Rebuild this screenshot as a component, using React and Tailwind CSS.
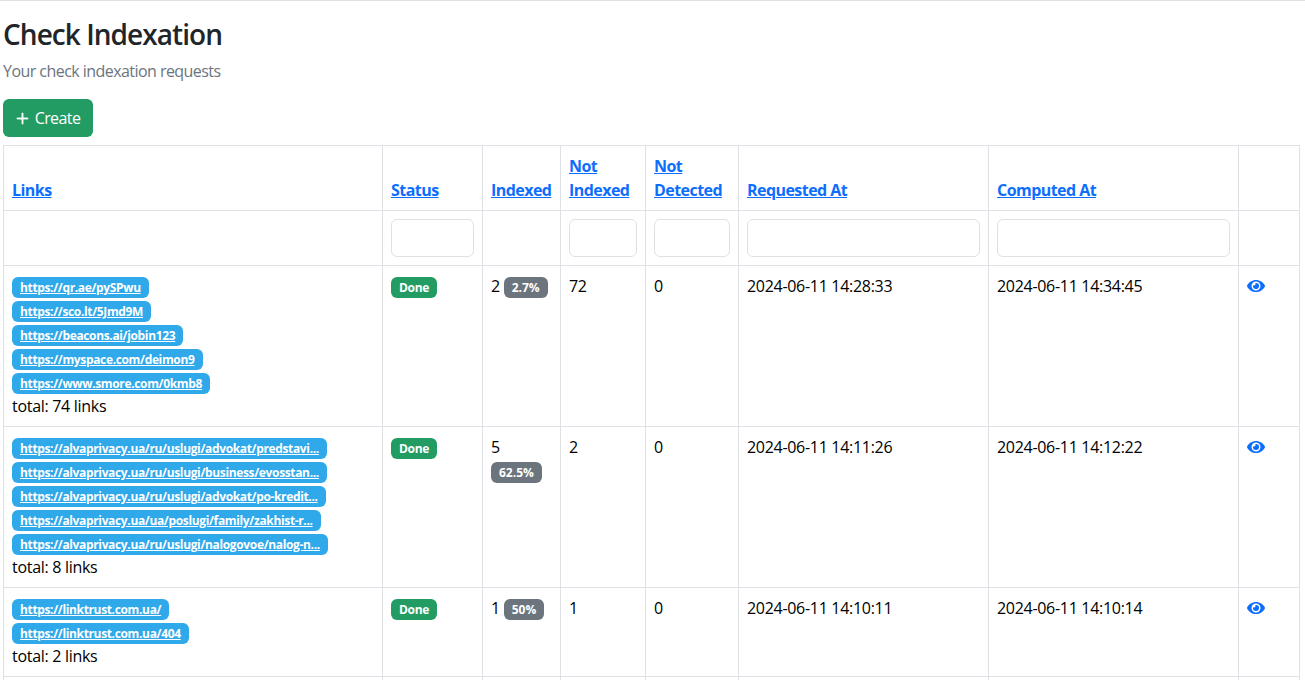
import { BsPlusLg } from 'react-icons/bs'
import { FaEye } from 'react-icons/fa'

const rows = [
  {
    links: ['https://qr.ae/pySPwu', 'https://sco.lt/5Jmd9M', 'https://beacons.ai/jobin123', 'https://myspace.com/deimon9', 'https://www.smore.com/0kmb8'],
    total: 74,
    indexed: 2,
    percent: '2.7%',
    notIndexed: 72,
    notDetected: 0,
    requested: '2024-06-11 14:28:33',
    computed: '2024-06-11 14:34:45',
  },
  {
    links: [
      'https://alvaprivacy.ua/ru/uslugi/advokat/predstavi...',
      'https://alvaprivacy.ua/ru/uslugi/business/evosstan...',
      'https://alvaprivacy.ua/ru/uslugi/advokat/po-kredit...',
      'https://alvaprivacy.ua/ua/poslugi/family/zakhist-r...',
      'https://alvaprivacy.ua/ru/uslugi/nalogovoe/nalog-n...',
    ],
    total: 8,
    indexed: 5,
    percent: '62.5%',
    notIndexed: 2,
    notDetected: 0,
    requested: '2024-06-11 14:11:26',
    computed: '2024-06-11 14:12:22',
  },
  {
    links: ['https://linktrust.com.ua/', 'https://linktrust.com.ua/404'],
    total: 2,
    indexed: 1,
    percent: '50%',
    notIndexed: 1,
    notDetected: 0,
    requested: '2024-06-11 14:10:11',
    computed: '2024-06-11 14:10:14',
  },
]

const headers = [
  ['Links'],
  ['Status'],
  ['Indexed'],
  ['Not', 'Indexed'],
  ['Not', 'Detected'],
  ['Requested At'],
  ['Computed At'],
]

const filters = [false, true, false, true, true, true, true, false]

const cell = 'border border-[#dee2e6] p-2 align-top text-black'
const badge = 'inline-block rounded-md px-2 py-1 text-xs leading-[13px] font-bold text-white'

export default function App() {
  return (
    <div className="h-[680px] overflow-hidden border-t border-[#dee2e6] bg-white px-[3px] font-['Open_Sans',sans-serif] text-base leading-6 tracking-[-0.3px] text-[#212529]">
      <h1 className="mt-4 mb-2 text-[28px] leading-[34px] font-[550] tracking-[-0.95px]">Check Indexation</h1>
      <p className="mb-4 tracking-[-0.55px] text-[#6c757d]">Your check indexation requests</p>
      <button className="mb-2 flex h-[38px] w-[90px] items-center justify-center gap-[5px] rounded-md bg-[#229c62] pr-[1px] tracking-[-0.6px] text-white">
        <BsPlusLg className="stroke-1 text-[15px]" />
        Create
      </button>
      <table className="w-[1296px] table-fixed border-collapse">
        <colgroup>
          <col className="w-[379px]" />
          <col className="w-[100px]" />
          <col className="w-[78px]" />
          <col className="w-[85px]" />
          <col className="w-[93px]" />
          <col className="w-[250px]" />
          <col className="w-[250px]" />
          <col className="w-[61px]" />
        </colgroup>
        <thead>
          <tr className="h-[65px]">
            {headers.map((lines) => (
              <th key={lines.join()} className="border border-[#dee2e6] px-2 py-2 text-left align-bottom font-bold tracking-[-0.55px] text-[#0d6efd] underline">
                {lines.map((line) => (
                  <div key={line}>{line}</div>
                ))}
              </th>
            ))}
            <th className="border border-[#dee2e6]" />
          </tr>
          <tr className="h-[55px]">
            {filters.map((hasInput, i) => (
              <th key={i} className="border border-[#dee2e6] p-2">
                {hasInput && <input type="text" className="block h-[38px] w-full rounded-md border border-[#dee2e6] bg-white" />}
              </th>
            ))}
          </tr>
        </thead>
        <tbody>
          {rows.map((row) => (
            <tr key={row.requested}>
              <td className={cell}>
                {row.links.map((link) => (
                  <div key={link}>
                    <a href="#" className={`${badge} bg-[#2fa9ea] tracking-[-0.35px] underline`}>{link}</a>
                  </div>
                ))}
                <div>total: {row.total} links</div>
              </td>
              <td className={cell}>
                <span className={`${badge} bg-[#229c62]`}>Done</span>
              </td>
              <td className={cell}>
                {row.indexed} <span className={`${badge} bg-[#6c757d] tracking-normal`}>{row.percent}</span>
              </td>
              <td className={cell}>{row.notIndexed}</td>
              <td className={cell}>{row.notDetected}</td>
              <td className={cell}>{row.requested}</td>
              <td className={cell}>{row.computed}</td>
              <td className={cell}>
                <a href="#" className="block pt-[3px] text-lg text-[#0d6efd]"><FaEye /></a>
              </td>
            </tr>
          ))}
          <tr className="h-8">
            {filters.map((_, i) => (
              <td key={i} className={cell} />
            ))}
          </tr>
        </tbody>
      </table>
    </div>
  )
}
